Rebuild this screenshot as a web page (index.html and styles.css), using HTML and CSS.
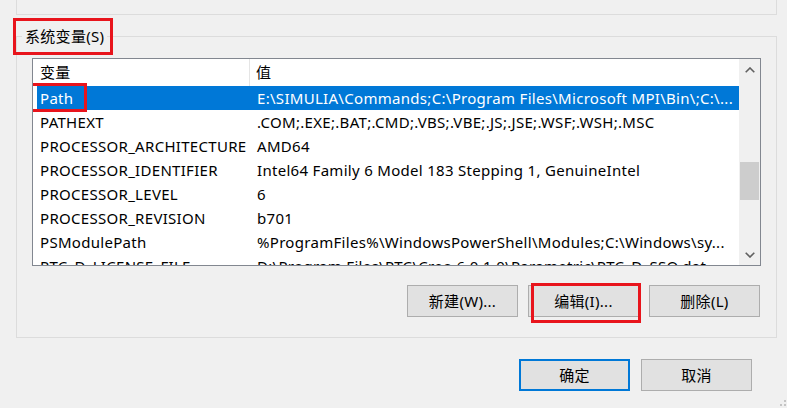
FILE: index.html
```html
<!DOCTYPE html>
<html lang="zh-CN">
<head>
<meta charset="utf-8">
<title>环境变量</title>
<link rel="stylesheet" href="styles.css">
</head>
<body>
<div class="prev-group"></div>

<div class="group">
  <div class="group-label">系统变量(S)<span class="mark mark-label"></span></div>

  <div class="listview">
    <div class="list-main">
      <div class="list-header">
        <div class="cell c1">变量</div>
        <div class="cell c2">值</div>
      </div>
      <div class="row selected">
        <div class="cell c1">Path<span class="mark mark-path"></span></div>
        <div class="cell c2">E:\SIMULIA\Commands;C:\Program Files\Microsoft MPI\Bin\;C:\...</div>
      </div>
      <div class="row">
        <div class="cell c1">PATHEXT</div>
        <div class="cell c2">.COM;.EXE;.BAT;.CMD;.VBS;.VBE;.JS;.JSE;.WSF;.WSH;.MSC</div>
      </div>
      <div class="row">
        <div class="cell c1">PROCESSOR_ARCHITECTURE</div>
        <div class="cell c2">AMD64</div>
      </div>
      <div class="row">
        <div class="cell c1">PROCESSOR_IDENTIFIER</div>
        <div class="cell c2">Intel64 Family 6 Model 183 Stepping 1, GenuineIntel</div>
      </div>
      <div class="row">
        <div class="cell c1">PROCESSOR_LEVEL</div>
        <div class="cell c2">6</div>
      </div>
      <div class="row">
        <div class="cell c1">PROCESSOR_REVISION</div>
        <div class="cell c2">b701</div>
      </div>
      <div class="row">
        <div class="cell c1">PSModulePath</div>
        <div class="cell c2">%ProgramFiles%\WindowsPowerShell\Modules;C:\Windows\sy...</div>
      </div>
      <div class="row">
        <div class="cell c1">PTC_D_LICENSE_FILE</div>
        <div class="cell c2">D:\Program Files\PTC\Creo 6.0.1.0\Parametric\PTC_D_SSO.dat</div>
      </div>
    </div>
    <div class="scrollbar">
      <div class="sb-btn">
        <svg width="10" height="6" viewBox="0 0 10 6"><path d="M0.7 5.3 L5 1 L9.3 5.3" fill="none" stroke="#606060" stroke-width="1.6"/></svg>
      </div>
      <div class="sb-track"><div class="sb-thumb"></div></div>
      <div class="sb-btn">
        <svg width="10" height="6" viewBox="0 0 10 6"><path d="M0.7 0.7 L5 5 L9.3 0.7" fill="none" stroke="#606060" stroke-width="1.6"/></svg>
      </div>
    </div>
  </div>

  <div class="btn-row">
    <button class="btn">新建(W)...</button>
    <button class="btn btn-edit">编辑(I)...<span class="mark mark-edit"></span></button>
    <button class="btn">删除(L)</button>
  </div>
</div>

<div class="dialog-buttons">
  <button class="btn btn-default">确定</button>
  <button class="btn">取消</button>
</div>

<svg class="grip" width="12" height="12" viewBox="0 0 12 12">
  <rect x="9" y="1" width="2" height="2" fill="#c4c4c4"/>
  <rect x="5" y="5" width="2" height="2" fill="#c4c4c4"/>
  <rect x="9" y="5" width="2" height="2" fill="#c4c4c4"/>
  <rect x="1" y="9" width="2" height="2" fill="#c4c4c4"/>
  <rect x="5" y="9" width="2" height="2" fill="#c4c4c4"/>
  <rect x="9" y="9" width="2" height="2" fill="#c4c4c4"/>
</svg>
</body>
</html>
```

FILE: styles.css
```css
* {
  box-sizing: border-box;
}

html, body {
  margin: 0;
  padding: 0;
}

body {
  width: 787px;
  height: 408px;
  overflow: hidden;
  position: relative;
  background: #f0f0f0;
  color: #000;
  font-family: "Noto Sans", "Noto Sans CJK SC", sans-serif;
  font-size: 15px;
}

.prev-group {
  margin-left: 16px;
  width: 761px;
  height: 15px;
  border: 1px solid #dcdcdc;
  border-top: none;
}

.group {
  margin-top: 21px;
  margin-left: 16px;
  width: 761px;
  height: 302px;
  border: 1px solid #dcdcdc;
}

.group-label {
  position: relative;
  width: fit-content;
  margin-top: -11px;
  margin-left: 5px;
  padding: 0 3px;
  height: 20px;
  line-height: 20px;
  background: #f0f0f0;
  white-space: nowrap;
  letter-spacing: 0.3px;
}

.mark {
  position: absolute;
  border: 3px solid #e8141c;
  pointer-events: none;
}

.mark-label {
  left: -9px;
  top: -8px;
  width: 100px;
  height: 37px;
}

.listview {
  margin-top: 12px;
  margin-left: 15px;
  width: 729px;
  height: 208px;
  border: 1px solid #828790;
  background: #fff;
  display: flex;
}

.list-main {
  flex: 1;
  min-width: 0;
  overflow: hidden;
  letter-spacing: 0.3px;
}

.list-header {
  display: flex;
  height: 27px;
  line-height: 27px;
}

.list-header .c1 {
  width: 217px;
  padding-left: 7px;
  border-right: 1px solid #e5e5e5;
}

.list-header .c2 {
  padding-left: 6px;
}

.row {
  display: flex;
  margin-left: 4px;
  height: 24px;
  line-height: 24px;
  white-space: nowrap;
}

.cell {
  white-space: nowrap;
}

.row .c1 {
  position: relative;
  width: 214px;
  flex: none;
  padding-left: 3px;
}

.row .c2 {
  flex: 1;
  min-width: 0;
  overflow: hidden;
  padding-left: 6px;
}

.row.selected {
  background: #0078d7;
  color: #fff;
}

.mark-path {
  left: -7px;
  top: -3px;
  width: 57px;
  height: 29px;
}

.scrollbar {
  width: 21px;
  flex: none;
  background: #f0f0f0;
  display: flex;
  flex-direction: column;
}

.sb-btn {
  height: 21px;
  display: flex;
  align-items: center;
  justify-content: center;
}

.sb-track {
  flex: 1;
}

.sb-thumb {
  margin-top: 82px;
  margin-left: 1px;
  width: 19px;
  height: 38px;
  background: #cdcdcd;
}

.btn {
  position: relative;
  width: 111px;
  height: 32px;
  padding: 0;
  border: 1px solid #adadad;
  background: #e1e1e1;
  color: #000;
  font-family: "Noto Sans", "Noto Sans CJK SC", sans-serif;
  font-size: 15px;
  line-height: 30px;
  white-space: nowrap;
  letter-spacing: 0.3px;
}

.btn-row {
  display: flex;
  justify-content: flex-end;
  gap: 10px;
  margin-top: 19px;
  margin-right: 16px;
}

.mark-edit {
  left: 2px;
  top: -3px;
  width: 110px;
  height: 40px;
}

.dialog-buttons {
  display: flex;
  justify-content: flex-end;
  gap: 11px;
  margin-top: 21px;
  margin-right: 35px;
}

.btn-default {
  border: 2px solid #0078d7;
  line-height: 28px;
}

.grip {
  position: absolute;
  right: 0;
  bottom: -3px;
}
```
